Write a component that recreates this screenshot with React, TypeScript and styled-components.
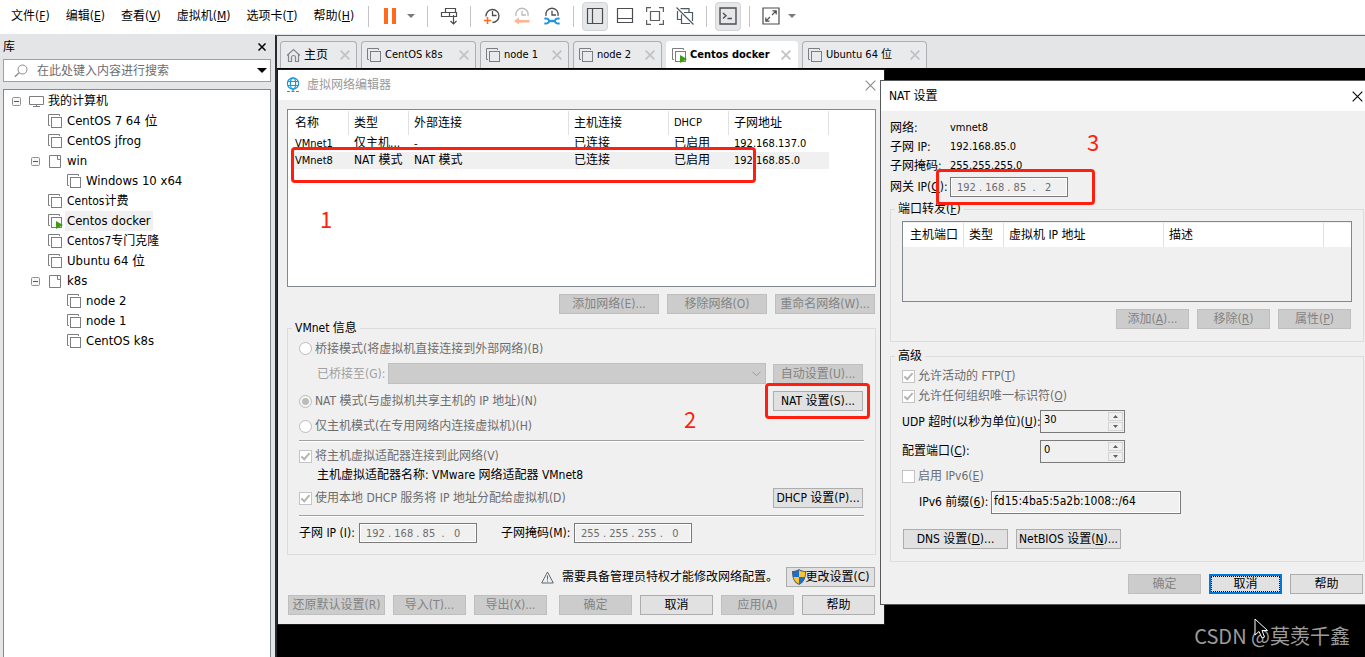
import React from "react";
import styled, { createGlobalStyle, css } from "styled-components";

const GlobalStyle = createGlobalStyle`
  *, *::before, *::after { box-sizing: border-box; }
  html, body { margin: 0; padding: 0; }
  body, button, input, select {
    font-family: "DejaVu Sans Condensed", "Noto Sans CJK SC", sans-serif;
    font-size: 12px;
    line-height: 16px;
    color: #000;
  }
  body { overflow: hidden; background: #000; }
`;

/* ---------- application shell ---------- */

const Shell = styled.div`
  display: flex;
  flex-direction: column;
  height: 100vh;
  min-height: 640px;
`;

const TopBar = styled.header`
  display: flex;
  align-items: flex-start;
  height: 34px;
  flex: none;
  background: #fff;
`;

const Menu = styled.nav`
  display: flex;
  align-items: center;
  gap: 16px;
  width: 368px;
  height: 31px;
  padding-left: 11px;
`;

const MenuItem = styled.button`
  padding: 0;
  border: 0;
  background: none;
  white-space: nowrap;
`;

const ToolGroup = styled.div`
  display: flex;
  align-items: center;
  gap: 4px;
  height: 32px;
  padding: 0 8px;
  position: relative;
  margin-left: 1px;
  &::before {
    content: "";
    position: absolute;
    left: -1px;
    top: 6px;
    width: 1px;
    height: 21px;
    background: #c4c4c4;
  }
`;

const ToolButton = styled.button<{ $on?: boolean }>`
  display: flex;
  align-items: center;
  justify-content: center;
  width: 26px;
  height: 29px;
  padding: 0;
  border: 1px solid ${(p) => (p.$on ? "#d2d3d5" : "transparent")};
  border-radius: 4px;
  background: ${(p) => (p.$on ? "#e6e7e9" : "transparent")};
  svg { flex: none; }
`;

const CaretButton = styled.button`
  display: flex;
  align-items: center;
  width: 12px;
  height: 29px;
  padding: 0;
  border: 0;
  background: none;
`;

const Main = styled.div`
  display: flex;
  flex: 1;
  min-height: 0;
  background: #e4e5e7;
`;

/* ---------- library side panel ---------- */

const Library = styled.aside`
  display: flex;
  flex-direction: column;
  flex: none;
  width: 275px;
  padding: 0 4px 0 3px;
`;

const LibraryHead = styled.div`
  display: flex;
  align-items: center;
  justify-content: space-between;
  height: 25px;
  padding: 0 5px 0 0;
`;

const IconButton = styled.button`
  display: flex;
  align-items: center;
  padding: 0;
  border: 0;
  background: none;
`;

const SearchBox = styled.div`
  display: flex;
  align-items: center;
  height: 23px;
  padding: 0 3px 0 10px;
  border: 1px solid #a0a0a0;
  background: #fff;
`;

const SearchInput = styled.input`
  flex: 1;
  min-width: 0;
  margin-left: 9px;
  padding: 0;
  border: 0;
  outline: 0;
  background: none;
  &::placeholder { color: #6d6d6d; opacity: 1; }
`;

const Tree = styled.ul`
  flex: 1;
  min-height: 0;
  margin: 7px 0 0;
  padding: 1px 0 0;
  list-style: none;
  overflow: hidden;
  border: 1px solid #828790;
  border-bottom: 0;
  background: #fff;
`;

const TreeRow = styled.li<{ $level: number; $leaf: boolean }>`
  display: flex;
  align-items: center;
  height: 20px;
  padding-left: ${(p) => 8 + p.$level * 19 + (p.$leaf ? 17 : 0)}px;
`;

const Expander = styled.button`
  display: flex;
  width: 17px;
  padding: 0;
  border: 0;
  background: none;
`;

const TreeLabel = styled.span<{ $selected?: boolean; $wide?: boolean }>`
  margin-left: 2px;
  padding: 0 2px;
  line-height: 20px;
  font-size: ${(p) => (p.$wide ? 13 : 12)}px;
  white-space: nowrap;
  background: ${(p) => (p.$selected ? "#f0f0f0" : "transparent")};
`;

/* ---------- workspace ---------- */

const Workspace = styled.main`
  display: flex;
  flex-direction: column;
  flex: 1;
  min-width: 0;
  margin-top: 1px;
  border-top: 1px solid #67686b;
  border-left: 2px solid #2a2b2e;
`;

const TabStrip = styled.div`
  display: flex;
  gap: 4px;
  height: 32px;
  flex: none;
  padding: 5px 3px 0;
`;

const Tab = styled.div<{ $active?: boolean; $width: number }>`
  display: flex;
  align-items: center;
  width: ${(p) => p.$width}px;
  padding: 0 6px 0 5px;
  border: 1px solid ${(p) => (p.$active ? "#fff" : "#adafb2")};
  border-bottom: 0;
  border-radius: 4px 4px 0 0;
  background: ${(p) => (p.$active ? "#fff" : "#e9eaec")};
`;

const TabTitle = styled.button<{ $bold?: boolean; $latin?: boolean }>`
  flex: 1;
  padding: 0 0 0 3px;
  border: 0;
  background: none;
  text-align: left;
  white-space: nowrap;
  font-size: ${(p) => (p.$latin ? 11 : 12)}px;
  font-weight: ${(p) => (p.$bold ? 700 : 400)};
`;

const Desktop = styled.div`
  position: relative;
  flex: 1;
  background: #000;
`;

/* ---------- dialogs ---------- */

const dialogBase = css`
  position: absolute;
  background: #f0f0f0;
`;

const EditorDialog = styled.section`
  ${dialogBase}
  left: 0;
  top: 1px;
  width: 608px;
  border: 1px solid #1c1c1c;
`;

const NatDialog = styled.section`
  ${dialogBase}
  left: 603px;
  right: 0;
  top: 12px;
  border: 1px solid #57585a;
  border-right: 0;
`;

const TitleBar = styled.div<{ $dim?: boolean }>`
  display: flex;
  align-items: center;
  height: 30px;
  padding: 0 8px;
  background: #fff;
  color: ${(p) => (p.$dim ? "#999" : "#000")};
  h2 {
    flex: 1;
    margin: 0;
    font-size: 12px;
    font-weight: 400;
  }
  svg + h2 { margin-left: 7px; }
`;

const EditorBody = styled.div`
  padding: 9px 8px 9px 9px;
`;

const NatBody = styled.div`
  padding: 7px 1px 10px 9px;
`;

const ListBox = styled.div<{ $height: number; $grey?: boolean }>`
  height: ${(p) => p.$height}px;
  padding-top: 1px;
  border: 1px solid #828790;
  background: ${(p) => (p.$grey ? "#f0f0f0" : "#fff")};
  overflow: hidden;
`;

const Grid = styled.table`
  table-layout: fixed;
  border-spacing: 0;
  th, td {
    padding: 0 0 0 5px;
    text-align: left;
    font-weight: 400;
    white-space: nowrap;
    overflow: hidden;
    text-overflow: ellipsis;
  }
  th {
    height: 24px;
    background: #fff;
    border-right: 1px solid #e0e0e0;
  }
  th:first-child { padding-left: 7px; }
  td { height: 17px; line-height: 17px; }
  td:first-child { border-left: 4px solid #fff; padding-left: 3px; }
`;

const HeadCell = styled.th<{ $latin?: boolean }>`
  font-size: ${(p) => (p.$latin ? 11 : 12)}px;
`;

const Cell = styled.td<{ $latin?: boolean; $selected?: boolean }>`
  font-size: ${(p) => (p.$latin ? 11 : 12)}px;
  background: ${(p) => (p.$selected ? "#f0f0f0" : "#fff")};
  background-clip: padding-box;
`;

const ButtonRow = styled.div<{ $top: number; $end?: boolean }>`
  display: flex;
  align-items: center;
  justify-content: ${(p) => (p.$end ? "flex-end" : "flex-start")};
  gap: 8px;
  margin-top: ${(p) => p.$top}px;
  padding: 0 1px;
`;

const SplitRow = styled.div`
  display: flex;
  justify-content: space-between;
  margin-top: 8px;
`;

const PushButton = styled.button<{ $width?: number; $focused?: boolean }>`
  display: flex;
  align-items: center;
  justify-content: center;
  flex: none;
  width: ${(p) => p.$width ?? 73}px;
  height: 20px;
  padding: 0;
  white-space: nowrap;
  border: 1px solid #adadad;
  background: #e1e1e1;
  color: #000;
  &:disabled {
    border-color: #bfbfbf;
    background: #ccc;
    color: #838383;
  }
  ${(p) =>
    p.$focused &&
    css`
      border: 2px solid #0078d7;
      outline: 1px dotted #000;
      outline-offset: -3px;
    `}
`;

const Group = styled.fieldset<{ $top: number; $bottom: number }>`
  min-width: 0;
  margin: ${(p) => p.$top}px 0 0;
  padding: 0 11px ${(p) => p.$bottom}px;
  border: 1px solid #dcdcdc;
  legend {
    height: 16px;
    margin-left: -7px;
    padding: 0 3px;
  }
`;

const Row = styled.div<{ $height: number; $indent?: number; $top?: number }>`
  display: flex;
  align-items: center;
  height: ${(p) => p.$height}px;
  margin-top: ${(p) => p.$top ?? 0}px;
  padding: 0 1px 0 ${(p) => p.$indent ?? 0}px;
  white-space: nowrap;
`;

const OptionLabel = styled.label`
  display: flex;
  align-items: center;
  gap: 3px;
  flex: 1;
  color: #6d6d6d;
`;

const Radio = styled.input.attrs({ type: "radio" })`
  appearance: none;
  width: 13px;
  height: 13px;
  margin: 0;
  border: 1px solid #bcbcbc;
  border-radius: 50%;
  background: #fff;
  &:checked { background: radial-gradient(circle, #bcbcbc 0 3px, #f4f4f4 4px); }
`;

const CheckBox = styled.input.attrs({ type: "checkbox" })`
  appearance: none;
  display: flex;
  justify-content: center;
  width: 13px;
  height: 13px;
  margin: 0;
  border: 1px solid #c4c4c4;
  background: #fff;
  &:checked::after {
    content: "";
    width: 5px;
    height: 9px;
    border: solid #b4b4b4;
    border-width: 0 2px 2px 0;
    transform: rotate(42deg);
  }
`;

const FieldLabel = styled.label<{ $width?: number; $dim?: boolean }>`
  flex: none;
  width: ${(p) => (p.$width ? `${p.$width}px` : "auto")};
  color: ${(p) => (p.$dim ? "#a0a0a0" : "#000")};
`;

const MaskLabel = styled(FieldLabel)`
  padding-left: 24px;
`;

const BridgeSelect = styled.div`
  display: flex;
  flex: 1;
  align-items: center;
  margin-right: 7px;
  border: 1px solid #bfbfbf;
  background: #ccc;
  padding-right: 4px;
  select {
    appearance: none;
    flex: 1;
    height: 19px;
    border: 0;
    background: transparent;
  }
`;

const Rule = styled.hr<{ $top: number }>`
  height: 2px;
  margin: ${(p) => p.$top}px 0 0;
  border: 0;
  border-top: 1px solid #a0a0a0;
  border-bottom: 1px solid #fff;
`;

const SunkenInput = styled.input<{ $width: number; $ip?: boolean }>`
  flex: none;
  width: ${(p) => p.$width}px;
  height: ${(p) => (p.$ip ? 20 : 23)}px;
  padding: ${(p) => (p.$ip ? "0 6px" : "0 2px 3px")};
  border: 1px solid #7a7a7a;
  outline: 1px solid #fff;
  outline-offset: -2px;
  background: #f0f0f0;
  font-size: ${(p) => (p.$ip ? 11 : 12)}px;
  color: ${(p) => (p.$ip ? "#6d6d6d" : "#000")};
`;

const SpinBox = styled.div`
  display: flex;
  width: 85px;
  height: 23px;
  border: 1px solid #7a7a7a;
  background: #f0f0f0;
  input {
    flex: 1;
    min-width: 0;
    padding: 0 2px 3px 3px;
    border: 0;
    background: none;
    font-size: 11px;
  }
`;

const SpinButtons = styled.div`
  display: flex;
  flex-direction: column;
  gap: 1px;
  width: 16px;
  padding: 1px 1px 1px 0;
  button {
    display: flex;
    flex: 1;
    align-items: center;
    justify-content: center;
    padding: 0;
    border: 1px solid #d4d4d4;
    background: #f0f0f0;
  }
`;

const InfoTerm = styled.span<{ $latin?: boolean }>`
  flex: none;
  width: ${(p) => (p.$latin ? "auto" : "60px")};
  font-size: ${(p) => (p.$latin ? 11 : 12)}px;
`;

/* ---------- annotations over the dialogs ---------- */

const Mark = styled.div<{ $x: number; $y: number; $w: number; $h: number }>`
  position: absolute;
  left: ${(p) => p.$x}px;
  top: ${(p) => p.$y}px;
  width: ${(p) => p.$w}px;
  height: ${(p) => p.$h}px;
  border: 3px solid #ff1f10;
  border-radius: 4px;
  pointer-events: none;
`;

const MarkNumber = styled.span<{ $x: number; $y: number }>`
  position: absolute;
  left: ${(p) => p.$x}px;
  top: ${(p) => p.$y}px;
  font-family: "Noto Sans CJK SC", sans-serif;
  font-size: 22px;
  line-height: 24px;
  color: #ff1f10;
`;

const Watermark = styled.div`
  position: absolute;
  right: 15px;
  bottom: 8px;
  font-family: "Noto Sans CJK SC", sans-serif;
  font-size: 20px;
  line-height: 26px;
  color: #9c9c9c;
`;

const Pointer = styled.svg`
  position: absolute;
  right: 96px;
  bottom: 18px;
`;

/* ---------- icons ---------- */

const Caret = ({ color = "#7a7a7a", w = 8 }: { color?: string; w?: number }) => (
  <svg width={w} height={w / 2} viewBox="0 0 8 4"><path d="M0 0h8L4 4z" fill={color} /></svg>
);

const Cross = ({ size, color, width = 1.2 }: { size: number; color: string; width?: number }) => (
  <svg width={size} height={size} viewBox="0 0 10 10">
    <path d="M.6.6l8.8 8.8M9.4.6L.6 9.4" stroke={color} strokeWidth={width} fill="none" />
  </svg>
);

const VmIcon = ({ running }: { running?: boolean }) => (
  <svg width="15" height="15" viewBox="0 0 15 15" fill="none" stroke="#7b7d80">
    <path d="M11.5 2V.5H.5v11H2" />
    <rect x="3.5" y="3.5" width="10" height="10" />
    {running && <path d="M8 7l7 4-7 4z" fill="#3f9c10" stroke="none" />}
  </svg>
);

const FolderIcon = () => (
  <svg width="15" height="15" viewBox="0 0 15 15" fill="none" stroke="#7b7d80">
    <path d="M1.500 1.500h11v12h-11zM9.500 1.500v4h3" />
  </svg>
);

const ComputerIcon = () => (
  <svg width="15" height="13" viewBox="0 0 15 13" fill="none" stroke="#7b7d80">
    <path d="M.5 1.500h14v8H.5zM7.500 9.500v2M4 11.500h7" />
  </svg>
);

const MinusBox = () => (
  <svg width="9" height="9" viewBox="0 0 9 9" fill="#f6f6f6" stroke="#919191">
    <rect x=".5" y=".5" width="8" height="8" rx="1" />
    <path d="M2 4.500h5" stroke="#3c55a0" />
  </svg>
);

const HomeIcon = () => (
  <svg width="15" height="15" viewBox="0 0 15 15" fill="none" stroke="#85878a" strokeWidth="1.200">
    <path d="M1 7.500L7.500 1.500 14 7.500M2.500 6.500v7h3v-4a2 2 0 0 1 4 0v4h3v-7" />
  </svg>
);

const SearchIcon = () => (
  <svg width="14" height="14" viewBox="0 0 14 14" fill="none" stroke="#8a8a8a">
    <circle cx="8.500" cy="5.500" r="4.500" />
    <path d="M5.200 8.800L.8 12.800" strokeWidth="1.400" />
  </svg>
);

const GlobeIcon = () => (
  <svg width="14" height="16" viewBox="0 0 14 16" fill="none" stroke="#1a9ad6" strokeWidth="1.200">
    <circle cx="7" cy="6.500" r="5.600" />
    <ellipse cx="7" cy="6.500" rx="2.600" ry="5.600" />
    <path d="M1.600 4.500h10.800M1.600 8.500h10.800M7 12v2" />
    <path d="M1 14.500h3M5.500 14.500h3M10 14.500h3" stroke="#17a398" />
  </svg>
);

const PauseIcon = () => (
  <svg width="12" height="16" viewBox="0 0 12 16" fill="#ff6a1c"><path d="M0 0h4v16H0zM8 0h4v16H8z" /></svg>
);

const SendKeysIcon = () => (
  <svg width="18" height="18" viewBox="0 0 18 18" fill="none" stroke="#4b4d50" strokeWidth="1.200">
    <path d="M5.500 1.500h10v4h-10zM1.500 5.500h8v4h-8zM9.500 5.500h7v4h-7M13.500 8v9" />
    <path d="M10.500 14l3 3 3-3" />
  </svg>
);

const ClockIcon = ({ kind }: { kind: "add" | "back" | "manage" }) => {
  const stroke = kind === "back" ? "#b9babc" : "#4b4d50";
  return (
    <svg width="18" height="18" viewBox="0 0 18 18" fill="none" stroke={stroke} strokeWidth="1.300">
      {kind === "add" && <path d="M3 9.500A6.500 6.500 0 1 1 9.500 15.500M9.500 4v4.500h4" />}
      {kind !== "add" && <path d="M3 9A6.200 6.200 0 1 1 15 9M9 3.800V8h4" />}
      {kind === "add" && <path d="M1 13.500h7M4.500 10v7" stroke="#ff6a1c" strokeWidth="1.600" />}
      {kind === "back" && <path d="M1 14l5-3.600V13h10.500v2.500H6v2.100z" fill="#ffb493" stroke="none" />}
      {kind === "manage" && (
        <g stroke="#2196dc" strokeWidth="2">
          <path d="M5.500 14h7" strokeWidth="2.400" />
          <path d="M1.400 11.800c2.600-1 4.600.2 4.600 2.200s-2 3.200-4.600 2.200M16.600 11.800c-2.600-1-4.600.2-4.600 2.200s2 3.200 4.600 2.200" />
        </g>
      )}
    </svg>
  );
};

const SidebarIcon = () => (
  <svg width="18" height="18" viewBox="0 0 18 18" fill="none" stroke="#4b4d50" strokeWidth="1.200">
    <path d="M1.500 1.500h15v15h-15zM6.500 1.500v15" />
  </svg>
);

const ThumbBarIcon = () => (
  <svg width="18" height="18" viewBox="0 0 18 18" fill="none" stroke="#4b4d50" strokeWidth="1.200">
    <path d="M1.500 1.500h15v14h-15zM1.500 11.500h15" />
  </svg>
);

const FullScreenIcon = () => (
  <svg width="18" height="18" viewBox="0 0 18 18" fill="none" stroke="#5b5d60" strokeWidth="1.200">
    <path d="M5 .6H.6V5M13 .6h4.400V5M5 17.400H.6V13M13 17.400h4.400V13M4.500 4.500h9v9h-9z" />
  </svg>
);

const UnityIcon = () => (
  <svg width="18" height="18" viewBox="0 0 18 18" fill="none" stroke="#4d5a66" strokeWidth="1.200">
    <path d="M4.500 1.600h8.500V5M1.500 4v8.500H5M8 5.500h8.500V14M5.500 7.500v9H14M.5.5l17 17" />
  </svg>
);

const ConsoleIcon = () => (
  <svg width="18" height="18" viewBox="0 0 18 18" fill="none" stroke="#4b4d50" strokeWidth="1.400">
    <path d="M1 1h16v16H1zM4 6l3 2.700-3 2.700M8.500 11.500h4.500" />
  </svg>
);

const StretchIcon = () => (
  <svg width="18" height="18" viewBox="0 0 18 18" fill="none" stroke="#4b4d50" strokeWidth="1.200">
    <path d="M1 1h16v16H1zM10.500 3.800h3.700v3.700M14.200 3.800L10 8M7.500 14.200H3.800v-3.700M3.800 14.200L8 10" />
  </svg>
);

const WarningIcon = () => (
  <svg width="13" height="13" viewBox="0 0 13 13" fill="none" stroke="#5a6872">
    <path d="M6.500 1L12.300 12H.7zM6.500 4.500v4M6.500 9.500v1.200" />
  </svg>
);

const ShieldIcon = () => (
  <svg width="14" height="16" viewBox="0 0 14 16">
    <path d="M7 0c2 1.500 4.500 2 7 2 0 6-1 11-7 14C1 13 0 8 0 2c2.500 0 5-.5 7-2z" fill="#53606a" />
    <path d="M7 1.300V8H1.400C1.100 6.300 1 4.700 1 3c2.200-.1 4.300-.6 6-1.700zM7 8h5.600c-.7 3-2.300 5.200-5.600 6.800z" fill="#1570d0" />
    <path d="M7 1.300V8h5.600c.3-1.700.4-3.300.4-5-2.200-.1-4.300-.6-6-1.700zM7 8H1.400c.7 3 2.300 5.200 5.600 6.800z" fill="#ffc32e" />
  </svg>
);

/* Draws a caption whose "&" marks the underlined access key. */
const Mnemonic = ({ text }: { text: string }) => {
  const at = text.indexOf("&");
  if (at < 0) return <>{text}</>;
  return (
    <span>
      {text.slice(0, at)}
      <u>{text[at + 1]}</u>
      {text.slice(at + 2)}
    </span>
  );
};

/* ---------- data ---------- */

const menus = ["文件(&F)", "编辑(&E)", "查看(&V)", "虚拟机(&M)", "选项卡(&T)", "帮助(&H)"];

type Node = { name: string; level: number; kind: "root" | "folder" | "vm"; running?: boolean; wide?: boolean };

const nodes: Node[] = [
  { name: "我的计算机", level: 0, kind: "root" },
  { name: "CentOS 7 64 位", level: 1, kind: "vm", wide: true },
  { name: "CentOS jfrog", level: 1, kind: "vm", wide: true },
  { name: "win", level: 1, kind: "folder", wide: true },
  { name: "Windows 10 x64", level: 2, kind: "vm", wide: true },
  { name: "Centos计费", level: 1, kind: "vm" },
  { name: "Centos docker", level: 1, kind: "vm", running: true, wide: true },
  { name: "Centos7专门克隆", level: 1, kind: "vm" },
  { name: "Ubuntu 64 位", level: 1, kind: "vm", wide: true },
  { name: "k8s", level: 1, kind: "folder", wide: true },
  { name: "node 2", level: 2, kind: "vm", wide: true },
  { name: "node 1", level: 2, kind: "vm", wide: true },
  { name: "CentOS k8s", level: 2, kind: "vm", wide: true },
];

const tabs = [
  { title: "主页", width: 77, home: true },
  { title: "CentOS k8s", width: 115, latin: true },
  { title: "node 1", width: 89, latin: true },
  { title: "node 2", width: 89, latin: true },
  { title: "Centos docker", width: 132, latin: true, active: true },
  { title: "Ubuntu 64 位", width: 125, latin: true },
];

const networks = [
  { cells: ["VMnet1", "仅主机...", "-", "已连接", "已启用", "192.168.137.0"], selected: false },
  { cells: ["VMnet8", "NAT 模式", "NAT 模式", "已连接", "已启用", "192.168.85.0"], selected: true },
];

const isLatin = (s: string) => /^[\x20-\x7e]+$/.test(s);

/* ---------- parts ---------- */

const Spin = ({ id, value }: { id: string; value: string }) => (
  <SpinBox>
    <input id={id} defaultValue={value} inputMode="numeric" />
    <SpinButtons>
      <button aria-label="增加"><svg width="5" height="3" viewBox="0 0 5 3"><path d="M0 3h5L2.500 0z" fill="#606060" /></svg></button>
      <button aria-label="减少"><svg width="5" height="3" viewBox="0 0 5 3"><path d="M0 0h5L2.500 3z" fill="#606060" /></svg></button>
    </SpinButtons>
  </SpinBox>
);

const VirtualNetworkEditor = () => (
  <EditorDialog aria-label="虚拟网络编辑器">
    <TitleBar $dim>
      <GlobeIcon />
      <h2>虚拟网络编辑器</h2>
      <IconButton aria-label="关闭"><Cross size={11} color="#8a8a8a" width={1} /></IconButton>
    </TitleBar>
    <EditorBody>
      <ListBox $height={178}>
        <Grid style={{ width: 541 }}>
          <colgroup>
            {[61, 60, 160, 100, 60, 100].map((w, i) => <col key={i} width={w} />)}
          </colgroup>
          <thead>
            <tr>
              {["名称", "类型", "外部连接", "主机连接", "DHCP", "子网地址"].map((h) => (
                <HeadCell key={h} $latin={isLatin(h)}>{h}</HeadCell>
              ))}
            </tr>
          </thead>
          <tbody>
            {networks.map((n) => (
              <tr key={n.cells[0]}>
                {n.cells.map((c, i) => (
                  <Cell key={i} $latin={isLatin(c)} $selected={n.selected}>{c}</Cell>
                ))}
              </tr>
            ))}
          </tbody>
        </Grid>
      </ListBox>
      <ButtonRow $top={7} $end>
        <PushButton $width={100} disabled>添加网络(E)...</PushButton>
        <PushButton $width={100} disabled>移除网络(O)</PushButton>
        <PushButton $width={100} disabled>重命名网络(W)...</PushButton>
      </ButtonRow>
      <Group $top={6} $bottom={11}>
        <legend>VMnet 信息</legend>
        <Row $height={25}>
          <OptionLabel><Radio name="mode" disabled />桥接模式(将虚拟机直接连接到外部网络)(B)</OptionLabel>
        </Row>
        <Row $height={25} $indent={18}>
          <FieldLabel $width={71} $dim htmlFor="bridge">已桥接至(G):</FieldLabel>
          <BridgeSelect>
            <select id="bridge" disabled />
            <svg width="9" height="6" viewBox="0 0 9 6"><path d="M.5.8l4 4 4-4" fill="none" stroke="#9a9a9a" /></svg>
          </BridgeSelect>
          <PushButton $width={90} disabled>自动设置(U)...</PushButton>
        </Row>
        <Row $height={30}>
          <OptionLabel><Radio name="mode" defaultChecked disabled />NAT 模式(与虚拟机共享主机的 IP 地址)(N)</OptionLabel>
          <PushButton $width={90}>NAT 设置(S)...</PushButton>
        </Row>
        <Row $height={20}>
          <OptionLabel><Radio name="mode" disabled />仅主机模式(在专用网络内连接虚拟机)(H)</OptionLabel>
        </Row>
        <Rule $top={4} />
        <Row $height={20} $top={4}>
          <OptionLabel><CheckBox defaultChecked disabled />将主机虚拟适配器连接到此网络(V)</OptionLabel>
        </Row>
        <Row $height={18} $indent={18}>主机虚拟适配器名称: VMware 网络适配器 VMnet8</Row>
        <Row $height={28}>
          <OptionLabel><CheckBox defaultChecked disabled />使用本地 DHCP 服务将 IP 地址分配给虚拟机(D)</OptionLabel>
          <PushButton $width={90}>DHCP 设置(P)...</PushButton>
        </Row>
        <Rule $top={3} />
        <Row $height={20} $top={6}>
          <FieldLabel $width={60} htmlFor="subnet">子网 IP (I):</FieldLabel>
          <SunkenInput id="subnet" $width={118} $ip readOnly value={"192 . 168 . 85 \u00a0. \u00a0 0"} />
          <MaskLabel $width={97} htmlFor="mask">子网掩码(M):</MaskLabel>
          <SunkenInput id="mask" $width={118} $ip readOnly value={"255 . 255 . 255 . \u00a0 0"} />
        </Row>
      </Group>
      <ButtonRow $top={12} $end>
        <WarningIcon />
        <span>需要具备管理员特权才能修改网络配置。</span>
        <PushButton $width={89}><ShieldIcon />更改设置(C)</PushButton>
      </ButtonRow>
      <SplitRow>
        <ButtonRow $top={0}>
          <PushButton $width={97} disabled>还原默认设置(R)</PushButton>
          <PushButton disabled>导入(T)...</PushButton>
          <PushButton disabled>导出(X)...</PushButton>
        </ButtonRow>
        <ButtonRow $top={0} $end>
          <PushButton disabled>确定</PushButton>
          <PushButton>取消</PushButton>
          <PushButton disabled>应用(A)</PushButton>
          <PushButton>帮助</PushButton>
        </ButtonRow>
      </SplitRow>
    </EditorBody>
    <Mark $x={13} $y={77} $w={465} $h={36} />
    <MarkNumber $x={42} $y={136}>1</MarkNumber>
    <Mark $x={487} $y={313} $w={105} $h={36} />
    <MarkNumber $x={406} $y={336}>2</MarkNumber>
  </EditorDialog>
);

const NatClose = styled(IconButton)`
  margin-right: -6px;
`;

const PortList = styled.div`
  padding-top: 4px;
`;

const PortHead = styled.div`
  background: #fff;
`;

const NatSettings = () => (
  <NatDialog aria-label="NAT 设置">
    <TitleBar>
      <h2>NAT 设置</h2>
      <NatClose aria-label="关闭"><Cross size={11} color="#000" width={1} /></NatClose>
    </TitleBar>
    <NatBody>
      <Row $height={19}><InfoTerm>网络:</InfoTerm><InfoTerm $latin>vmnet8</InfoTerm></Row>
      <Row $height={19}><InfoTerm>子网 IP:</InfoTerm><InfoTerm $latin>192.168.85.0</InfoTerm></Row>
      <Row $height={19}><InfoTerm>子网掩码:</InfoTerm><InfoTerm $latin>255.255.255.0</InfoTerm></Row>
      <Row $height={24}>
        <FieldLabel $width={60} htmlFor="gateway"><Mnemonic text="网关 IP(&G):" /></FieldLabel>
        <SunkenInput id="gateway" $width={118} $ip readOnly value={"192 . 168 . 85 \u00a0. \u00a0 2"} />
      </Row>
      <Group $top={2} $bottom={12}>
        <legend><Mnemonic text="端口转发(&F)" /></legend>
        <PortList>
          <ListBox $height={81} $grey>
            <PortHead>
              <Grid style={{ width: 421 }}>
                <colgroup>
                  {[61, 40, 160, 160].map((w, i) => <col key={i} width={w} />)}
                </colgroup>
                <thead>
                  <tr>
                    {["主机端口", "类型", "虚拟机 IP 地址", "描述"].map((h) => <HeadCell key={h}>{h}</HeadCell>)}
                  </tr>
                </thead>
              </Grid>
            </PortHead>
          </ListBox>
        </PortList>
        <ButtonRow $top={7} $end>
          <PushButton disabled><Mnemonic text="添加(&A)..." /></PushButton>
          <PushButton disabled><Mnemonic text="移除(&R)" /></PushButton>
          <PushButton disabled><Mnemonic text="属性(&P)" /></PushButton>
        </ButtonRow>
      </Group>
      <Group $top={6} $bottom={12}>
        <legend>高级</legend>
        <Row $height={20} $top={2}>
          <OptionLabel><CheckBox defaultChecked disabled /><Mnemonic text="允许活动的 FTP(&T)" /></OptionLabel>
        </Row>
        <Row $height={20}>
          <OptionLabel><CheckBox defaultChecked disabled /><Mnemonic text="允许任何组织唯一标识符(&O)" /></OptionLabel>
        </Row>
        <Row $height={31}>
          <FieldLabel $width={138} htmlFor="udp"><Mnemonic text="UDP 超时(以秒为单位)(&U):" /></FieldLabel>
          <Spin id="udp" value="30" />
        </Row>
        <Row $height={28}>
          <FieldLabel $width={138} htmlFor="port"><Mnemonic text="配置端口(&C):" /></FieldLabel>
          <Spin id="port" value="0" />
        </Row>
        <Row $height={22}>
          <OptionLabel><CheckBox disabled /><Mnemonic text="启用 IPv6(&E)" /></OptionLabel>
        </Row>
        <Row $height={30} $indent={17}>
          <FieldLabel $width={72} htmlFor="prefix"><Mnemonic text="IPv6 前缀(&6):" /></FieldLabel>
          <SunkenInput id="prefix" $width={190} readOnly value="fd15:4ba5:5a2b:1008::/64" />
        </Row>
        <ButtonRow $top={12}>
          <PushButton $width={105}><Mnemonic text="DNS 设置(&D)..." /></PushButton>
          <PushButton $width={105}><Mnemonic text="NetBIOS 设置(&N)..." /></PushButton>
        </ButtonRow>
      </Group>
      <ButtonRow $top={12} $end>
        <PushButton disabled>确定</PushButton>
        <PushButton $focused>取消</PushButton>
        <PushButton>帮助</PushButton>
      </ButtonRow>
    </NatBody>
    <Mark $x={55} $y={88} $w={159} $h={36} />
    <MarkNumber $x={206} $y={48}>3</MarkNumber>
  </NatDialog>
);

export default function App() {
  return (
    <Shell>
      <GlobalStyle />
      <TopBar>
        <Menu>
          {menus.map((m) => <MenuItem key={m}><Mnemonic text={m} /></MenuItem>)}
        </Menu>
        <ToolGroup>
          <ToolButton aria-label="挂起"><PauseIcon /></ToolButton>
          <CaretButton aria-label="电源选项"><Caret /></CaretButton>
        </ToolGroup>
        <ToolGroup><ToolButton aria-label="发送按键"><SendKeysIcon /></ToolButton></ToolGroup>
        <ToolGroup>
          <ToolButton aria-label="拍摄快照"><ClockIcon kind="add" /></ToolButton>
          <ToolButton aria-label="恢复快照"><ClockIcon kind="back" /></ToolButton>
          <ToolButton aria-label="管理快照"><ClockIcon kind="manage" /></ToolButton>
        </ToolGroup>
        <ToolGroup>
          <ToolButton $on aria-label="显示库"><SidebarIcon /></ToolButton>
          <ToolButton aria-label="缩略图栏"><ThumbBarIcon /></ToolButton>
          <ToolButton aria-label="全屏"><FullScreenIcon /></ToolButton>
          <ToolButton aria-label="Unity"><UnityIcon /></ToolButton>
        </ToolGroup>
        <ToolGroup><ToolButton $on aria-label="控制台"><ConsoleIcon /></ToolButton></ToolGroup>
        <ToolGroup>
          <ToolButton aria-label="拉伸"><StretchIcon /></ToolButton>
          <CaretButton aria-label="拉伸选项"><Caret /></CaretButton>
        </ToolGroup>
      </TopBar>
      <Main>
        <Library>
          <LibraryHead>
            <span>库</span>
            <IconButton aria-label="关闭库"><Cross size={8} color="#000" width={1.8} /></IconButton>
          </LibraryHead>
          <SearchBox>
            <SearchIcon />
            <SearchInput placeholder="在此处键入内容进行搜索" aria-label="搜索" />
            <Caret color="#000" w={10} />
          </SearchBox>
          <Tree>
            {nodes.map((n) => (
              <TreeRow key={n.name} $level={n.level} $leaf={n.kind === "vm"}>
                {n.kind !== "vm" && <Expander aria-label="折叠"><MinusBox /></Expander>}
                {n.kind === "vm" && <VmIcon running={n.running} />}
                {n.kind === "folder" && <FolderIcon />}
                {n.kind === "root" && <ComputerIcon />}
                <TreeLabel $selected={n.running} $wide={n.wide}>{n.name}</TreeLabel>
              </TreeRow>
            ))}
          </Tree>
        </Library>
        <Workspace>
          <TabStrip>
            {tabs.map((t) => (
              <Tab key={t.title} $width={t.width} $active={t.active}>
                {t.home ? <HomeIcon /> : <VmIcon running={t.active} />}
                <TabTitle $bold={t.active} $latin={t.latin}>{t.title}</TabTitle>
                <IconButton aria-label="关闭标签"><Cross size={10} color="#c2c3c5" width={1.8} /></IconButton>
              </Tab>
            ))}
          </TabStrip>
          <Desktop>
            <VirtualNetworkEditor />
            <NatSettings />
            <Watermark>CSDN @莫羡千鑫</Watermark>
            <Pointer width="15" height="21" viewBox="0 0 15 21">
              <path d="M1 1v16l4-3.500L8 20l2.500-1L8 12.500h5.500z" fill="#000" stroke="#fff" />
            </Pointer>
          </Desktop>
        </Workspace>
      </Main>
    </Shell>
  );
}
